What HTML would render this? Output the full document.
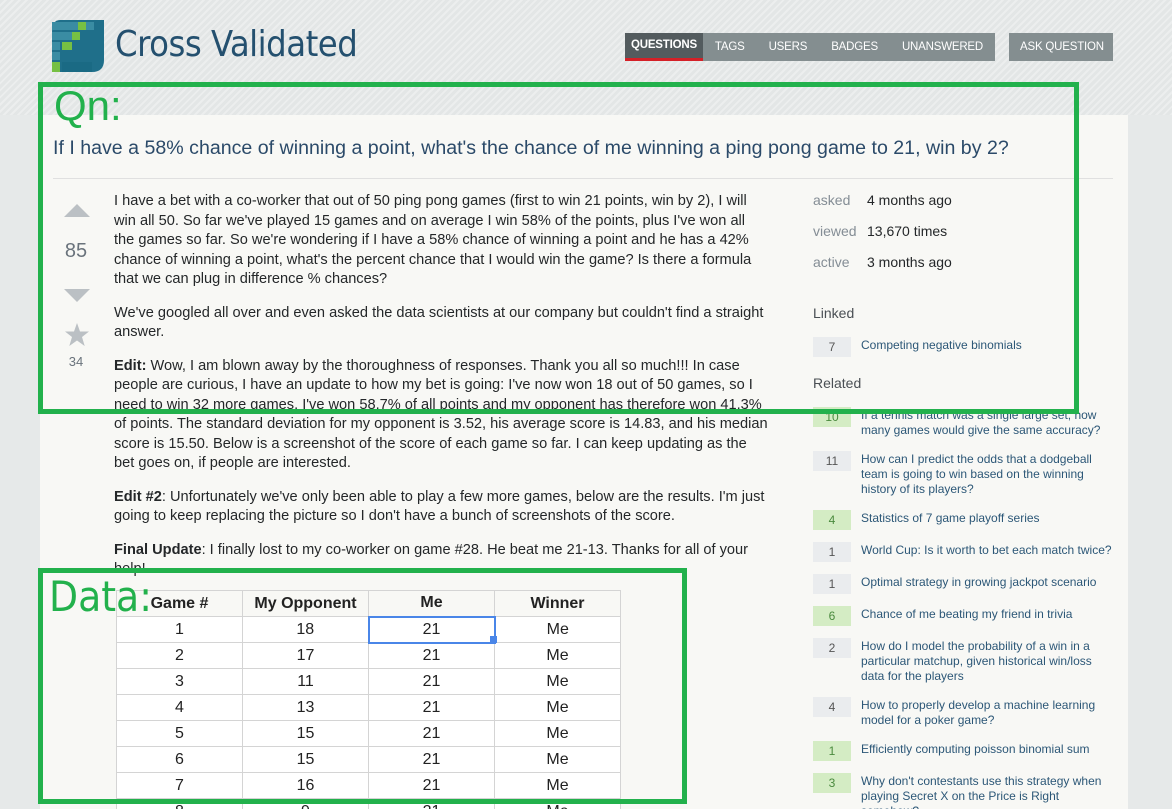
<!DOCTYPE html>
<html><head><meta charset="utf-8"><style>
*{margin:0;padding:0;box-sizing:border-box}
html{width:1172px;height:809px;overflow:hidden}
body{width:1172px;height:809px;overflow:hidden;background:#e6e9e9;font-family:"Liberation Sans",Arial,sans-serif;position:relative}
.hdr{position:absolute;left:0;top:0;width:1172px;height:115px;background:repeating-linear-gradient(135deg,#e3e6e6 0 3px,#eceeee 3px 5px)}
.main{position:absolute;left:40px;top:115px;width:1088px;height:694px;background:#f8f8f5}
.abs{position:absolute}
.nav{position:absolute;top:33px;height:28px;background:#848e90;color:#fff;font-size:11.5px;display:flex;letter-spacing:-0.2px}
.nav span{padding:0 12px;line-height:28px}
.body p{margin-bottom:14px}
.body{position:absolute;left:114px;top:192px;width:655px;font-size:14.6px;line-height:19.5px;color:#242729}
.side{position:absolute;left:813px;color:#242729;font-size:14px}
.rel{position:absolute;left:813px;font-size:12px;color:#2c5777;line-height:15px}
.rel b{position:absolute;left:0;top:-1px;width:38px;height:20px;background:#eaecee;color:#555;font-weight:normal;text-align:center;line-height:20px}
.rel b.g{background:#d4ecc4;color:#4a8a3e}
.rel span{position:absolute;left:48px;width:256px}
table{position:absolute;left:116px;top:590px;border-collapse:collapse;font-size:16px;background:#fff}
td{width:126px;height:26px;text-align:center;border:1px solid #d4d4d4;color:#222}
tr:first-child td{font-weight:bold;background:#f8f8f5}
.gb{position:absolute;border:5px solid #22b14c}
</style></head><body>
<div class="hdr"></div>
<div class="main"></div>
<svg class="abs" style="left:52px;top:20px" width="52" height="52" viewBox="0 0 52 52">
<path d="M8 0H52V40Q52 52 40 52H0V12Q0 0 8 0Z" fill="#1f6f8a"/>
<rect x="0" y="2" width="26" height="8" fill="#3a8ca3"/><rect x="0" y="12" width="20" height="8" fill="#3a8ca3"/><rect x="26" y="2" width="8" height="8" fill="#76c043"/><rect x="34" y="2" width="8" height="8" fill="#3a8ca3"/><rect x="20" y="12" width="8" height="8" fill="#76c043"/><rect x="0" y="22" width="8" height="8" fill="#3a8ca3"/><rect x="10" y="22" width="10" height="8" fill="#76c043"/><rect x="0" y="32" width="8" height="8" fill="#3a8ca3"/><rect x="0" y="42" width="8" height="10" fill="#76c043"/><rect x="10" y="42" width="30" height="10" fill="#1a6a84"/>
</svg>
<div class="abs" style="left:115px;top:24px;font-size:36px;color:#24506f;font-family:'DejaVu Sans Condensed','Liberation Sans',sans-serif;letter-spacing:-0.5px">Cross Validated</div>
<div class="nav" style="left:625px;width:370px"><span style="background:#535b5e;font-weight:bold;border-bottom:3px solid #d42027;line-height:25px;width:85px;text-align:center;padding:0">QUESTIONS</span><span>TAGS</span><span>USERS</span><span>BADGES</span><span>UNANSWERED</span></div>
<div class="nav" style="left:1009px;width:104px"><span style="padding:0 0 0 11px">ASK QUESTION</span></div>
<div class="abs" style="left:53px;top:137px;font-size:19.6px;color:#2b4a69">If I have a 58% chance of winning a point, what's the chance of me winning a ping pong game to 21, win by 2?</div>
<div class="abs" style="left:53px;top:178px;width:1060px;height:1px;background:#e0e0e0"></div>
<svg class="abs" style="left:64px;top:202px" width="26" height="160"><path d="M0 15L13 2L26 15Z" fill="#bbc0c4"/><path d="M0 87L13 100L26 87Z" fill="#bbc0c4"/><path d="M13 121l3 8.5h9l-7 5.5 2.7 9-7.7-5.5-7.7 5.5 2.7-9-7-5.5h9z" fill="#bbc0c4"/></svg>
<div class="abs" style="left:57px;top:240px;width:38px;text-align:center;font-size:20px;color:#6a737c">85</div>
<div class="abs" style="left:57px;top:354px;width:38px;text-align:center;font-size:13px;color:#6a737c">34</div>
<div class="body">
<p>I have a bet with a co-worker that out of 50 ping pong games (first to win 21 points, win by 2), I will win all 50. So far we've played 15 games and on average I win 58% of the points, plus I've won all the games so far. So we're wondering if I have a 58% chance of winning a point and he has a 42% chance of winning a point, what's the percent chance that I would win the game? Is there a formula that we can plug in difference % chances?</p>
<p>We've googled all over and even asked the data scientists at our company but couldn't find a straight answer.</p>
<p><b>Edit:</b> Wow, I am blown away by the thoroughness of responses. Thank you all so much!!! In case people are curious, I have an update to how my bet is going: I've now won 18 out of 50 games, so I need to win 32 more games. I've won 58.7% of all points and my opponent has therefore won 41.3% of points. The standard deviation for my opponent is 3.52, his average score is 14.83, and his median score is 15.50. Below is a screenshot of the score of each game so far. I can keep updating as the bet goes on, if people are interested.</p>
<p><b>Edit #2</b>: Unfortunately we've only been able to play a few more games, below are the results. I'm just going to keep replacing the picture so I don't have a bunch of screenshots of the score.</p>
<p><b>Final Update</b>: I finally lost to my co-worker on game #28. He beat me 21-13. Thanks for all of your help!</p>
</div>
<div class="side" style="top:185px;line-height:31px;font-size:14px"><span style="color:#848d95;display:inline-block;width:54px">asked</span>4 months ago<br><span style="color:#848d95;display:inline-block;width:54px">viewed</span>13,670 times<br><span style="color:#848d95;display:inline-block;width:54px">active</span>3 months ago</div>
<div class="side" style="top:305px;font-size:14px;color:#4a4f54">Linked</div>
<div class="rel" style="top:338px"><b>7</b><span>Competing negative binomials</span></div>
<div class="side" style="top:375px;font-size:14px;color:#4a4f54">Related</div>
<div class="rel" style="top:408px"><b class="g">10</b><span>If a tennis match was a single large set, how many games would give the same accuracy?</span></div>
<div class="rel" style="top:452px"><b>11</b><span>How can I predict the odds that a dodgeball team is going to win based on the winning history of its players?</span></div>
<div class="rel" style="top:511px"><b class="g">4</b><span>Statistics of 7 game playoff series</span></div>
<div class="rel" style="top:543px"><b>1</b><span>World Cup: Is it worth to bet each match twice?</span></div>
<div class="rel" style="top:575px"><b>1</b><span>Optimal strategy in growing jackpot scenario</span></div>
<div class="rel" style="top:607px"><b class="g">6</b><span>Chance of me beating my friend in trivia</span></div>
<div class="rel" style="top:639px"><b>2</b><span style="width:245px">How do I model the probability of a win in a particular matchup, given historical win/loss data for the players</span></div>
<div class="rel" style="top:698px"><b>4</b><span>How to properly develop a machine learning model for a poker game?</span></div>
<div class="rel" style="top:742px"><b class="g">1</b><span>Efficiently computing poisson binomial sum</span></div>
<div class="rel" style="top:774px"><b class="g">3</b><span style="width:245px">Why don't contestants use this strategy when playing Secret X on the Price is Right somehow?</span></div>
<table>
<tr><td>Game #</td><td>My Opponent</td><td>Me</td><td>Winner</td></tr>
<tr><td>1</td><td>18</td><td style="border:2px solid #4a86e8">21</td><td>Me</td></tr>
<tr><td>2</td><td>17</td><td>21</td><td>Me</td></tr>
<tr><td>3</td><td>11</td><td>21</td><td>Me</td></tr>
<tr><td>4</td><td>13</td><td>21</td><td>Me</td></tr>
<tr><td>5</td><td>15</td><td>21</td><td>Me</td></tr>
<tr><td>6</td><td>15</td><td>21</td><td>Me</td></tr>
<tr><td>7</td><td>16</td><td>21</td><td>Me</td></tr>
<tr><td>8</td><td>9</td><td>21</td><td>Me</td></tr>
</table>
<div class="abs" style="left:490px;top:636px;width:7px;height:7px;background:#4a86e8"></div>
<div class="gb" style="left:38px;top:82px;width:1041px;height:332px"></div>
<div class="gb" style="left:38px;top:568px;width:649px;height:236px"></div>
<div class="abs" style="left:54px;top:82px;font-size:42px;color:#22b14c">Qn:</div>
<div class="abs" style="left:49px;top:572px;font-size:42px;color:#22b14c;font-family:'DejaVu Sans Condensed','DejaVu Sans',sans-serif">Data:</div>
</body></html>
